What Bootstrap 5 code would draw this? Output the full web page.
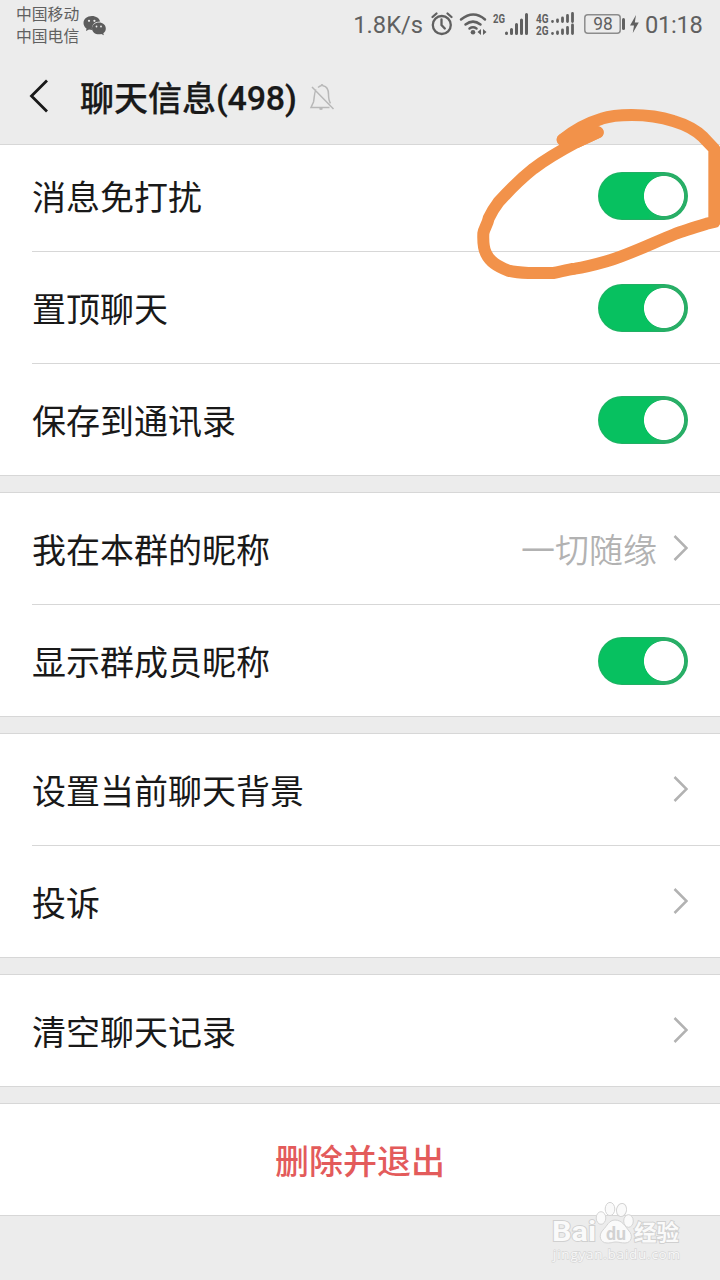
<!DOCTYPE html>
<html lang="zh-CN">
<head>
<meta charset="utf-8">
<meta name="viewport" content="width=device-width, initial-scale=1">
<title>聊天信息</title>
<link href="https://cdn.jsdelivr.net/npm/bootstrap@5.3.0/dist/css/bootstrap.min.css" rel="stylesheet">
<style>
body{background:#ececec;color:#191919;font-family:Roboto,"Noto Sans CJK SC",sans-serif;width:720px;height:1280px;overflow:hidden}
.status{height:50px;color:#606060;padding-left:16px;padding-right:16px}
.carriers{font-size:15.8px;line-height:22px;padding-top:4px}
.stat-text{font-size:23.7px;line-height:50px;white-space:nowrap}
.titlebar{height:94px;padding-left:28px}
.titlebar h1{font-size:34px;line-height:50px;font-weight:500;margin-left:30px;padding-top:2px;white-space:nowrap;-webkit-text-stroke:.25px #191919}
.title-num{letter-spacing:-.2px;vertical-align:1px}
.cells{border-top:1px solid #d7d7d7;border-bottom:1px solid #d7d7d7;background:#fff;margin-bottom:16px}
.cell{height:111px;margin-left:32px;padding:1px 32px 0 0;font-size:34px;line-height:50px}
.cell > span{padding-top:3px}
.cell > svg{margin-bottom:2px}
.cell + .cell{border-top:1px solid #d7d7d7;height:112px}
.cell.first-cell{height:106px;padding:0 32px 4px 0}
.toggle.form-check-input{width:90px;height:48px;margin:0;border:0;border-radius:24px;background-color:#2aae67;background-size:100% 100%;box-shadow:inset 0 0 0 1px #22af64}
.toggle.form-check-input:checked{background-color:#2aae67;background-image:radial-gradient(circle at 66px 24px,#fff 19.6px,transparent 20.4px),linear-gradient(90deg,#07c160 0 50px,#2aae67 66px);background-position:0 0}
.hint{color:#b2b2b2;font-weight:350}
.remove{color:#e35b5b;height:111px;font-size:34px;line-height:50px;font-weight:500;padding-top:4px}
.scribble{left:460px;top:100px}
.watermark{left:546px;top:1196px}
</style>
</head>
<body class="position-relative">
<header>
  <div class="status d-flex align-items-start">
    <div class="carriers text-nowrap"><div>中国移动</div><div>中国电信</div></div>
    <svg class="ms-1 mt-3" width="24" height="20" viewBox="0 0 24 20" fill="#5c5c5c"><path d="M9 0C4 0 .5 3 .5 7c0 2.200 1.100 4.200 3 5.500L3 15l3-1.500q1.500.400 3 .400C8.300 9 12 5.500 17.200 5.600 16.300 2.200 13 0 9 0Z"/><path d="M16 6.500c-4 0-7 2.600-7 5.900s3 5.900 7 5.900q1.200 0 2.300-.300l2.600 1.300-.600-2.100c1.700-1.200 2.500-2.900 2.500-4.800 0-3.300-3-5.900-6.800-5.900Z"/><g fill="#ececec"><circle cx="6" cy="4.800" r="1.100"/><circle cx="11.400" cy="4.800" r="1.100"/><circle cx="13.500" cy="10.500" r=".9"/><circle cx="18" cy="10.500" r=".9"/></g></svg>
    <span class="stat-text ms-auto">1.8K/s</span>
    <svg width="216" height="50" viewBox="430 0 216 50" fill="#606060" style="margin-left:7px">
      <g fill="none" stroke="#606060" stroke-width="2.300" stroke-linecap="round">
        <circle cx="441.800" cy="25" r="9"/><path d="M441.500 19.500V25l3.300 3.500M432.500 17l4-3.500M451.500 17l-4-3.500"/>
        <path d="M461 19.500q12.500-10 24 0M465.500 24.500q7.500-5.800 15 0M469.500 28.500q3.500-2.300 7 0" stroke-width="2.500"/>
      </g>
      <circle cx="473" cy="32.300" r="2.300"/><path d="M481 29v6l-3.500-3ZM483 29v6l3.500-3Z"/>
      <g font-family="Roboto,sans-serif" font-weight="700" font-size="12">
        <text x="493" y="22.500" textLength="12" lengthAdjust="spacingAndGlyphs">2G</text>
        <text x="536" y="22.500" textLength="12.500" lengthAdjust="spacingAndGlyphs">4G</text>
        <text x="536" y="35" textLength="12.500" lengthAdjust="spacingAndGlyphs">2G</text>
      </g>
      <path d="M506.500 33v.5M511.500 29.500v4M516.500 24.500v9M521.500 20v13.500M526.500 14.500v19" stroke="#606060" stroke-width="3" stroke-linecap="round"/>
      <path d="M552.500 21.500v0M557.500 20v1.500M562.500 18v3.500M567.500 15.500v6M572.500 13.500v8M552.500 33.500v0M557.500 32v1.500M562.500 30v3.500M567.500 27.500v6M572.500 25v8.500" stroke="#606060" stroke-width="2.800" stroke-linecap="round"/>
      <rect x="584.800" y="14.800" width="35.400" height="18.400" rx="3" fill="none" stroke="#8c8c8c" stroke-width="1.500"/>
      <rect x="622" y="18" width="3" height="12" rx="1.500"/>
      <text x="603" y="30.300" text-anchor="middle" font-family="Roboto,sans-serif" font-size="18" textLength="19.500" lengthAdjust="spacingAndGlyphs">98</text>
      <path d="M636 15l-6 10.500h4l-1.200 7.500 6-10.500h-4Z"/>
    </svg>
    <span class="stat-text" style="width:59px;margin-left:-1px;letter-spacing:-.3px">01:18</span>
  </div>
  <div class="titlebar d-flex align-items-center">
    <svg width="22" height="36" viewBox="0 0 22 36" fill="none" stroke="#191919" stroke-width="2.800"><path d="M19 1.500 3.500 17 19 32.500"/></svg>
    <h1 class="mb-0">聊天信息<span class="title-num">(498)</span></h1>
    <svg style="margin-left:12px" width="28" height="30" viewBox="0 0 28 30" fill="none" stroke="#b8b8b8" stroke-width="1.500"><path d="M7 7.500C5 11 5.500 16 4.500 20L2 25.500h18.500M9 5.500q2-1.600 3-1.700 1-2 2 0 5.500 1 5.500 8.500 0 6 2 9M10.500 26.500q1.500 1.300 3 0M3 5l21.500 22"/></svg>
  </div>
</header>
<main>
  <section class="cells">
    <div class="cell first-cell d-flex align-items-center justify-content-between"><span>消息免打扰</span><input class="form-check-input toggle" type="checkbox" checked></div>
    <div class="cell d-flex align-items-center justify-content-between"><span>置顶聊天</span><input class="form-check-input toggle" type="checkbox" checked></div>
    <div class="cell d-flex align-items-center justify-content-between"><span>保存到通讯录</span><input class="form-check-input toggle" type="checkbox" checked></div>
  </section>
  <section class="cells">
    <div class="cell d-flex align-items-center"><span>我在本群的昵称</span><span class="hint ms-auto">一切随缘</span><svg class="ms-3" width="15" height="28" viewBox="0 0 15 28" fill="none" stroke="#b2b2b2" stroke-width="2.500"><path d="M1.500 2 13.500 14 1.500 26"/></svg></div>
    <div class="cell d-flex align-items-center justify-content-between"><span>显示群成员昵称</span><input class="form-check-input toggle" type="checkbox" checked></div>
  </section>
  <section class="cells">
    <div class="cell d-flex align-items-center justify-content-between"><span>设置当前聊天背景</span><svg width="15" height="28" viewBox="0 0 15 28" fill="none" stroke="#b2b2b2" stroke-width="2.500"><path d="M1.500 2 13.500 14 1.500 26"/></svg></div>
    <div class="cell d-flex align-items-center justify-content-between"><span>投诉</span><svg width="15" height="28" viewBox="0 0 15 28" fill="none" stroke="#b2b2b2" stroke-width="2.500"><path d="M1.500 2 13.500 14 1.500 26"/></svg></div>
  </section>
  <section class="cells">
    <div class="cell d-flex align-items-center justify-content-between"><span>清空聊天记录</span><svg width="15" height="28" viewBox="0 0 15 28" fill="none" stroke="#b2b2b2" stroke-width="2.500"><path d="M1.500 2 13.500 14 1.500 26"/></svg></div>
  </section>
  <section class="cells">
    <div class="remove d-flex align-items-center justify-content-center">删除并退出</div>
  </section>
</main>
<svg class="scribble position-absolute" width="260" height="190" viewBox="0 0 780 570" fill="none" stroke="#f2924a" stroke-width="36" stroke-linecap="round" stroke-linejoin="round"><path d="M308 119 345 95 413 97 350 126Z" fill="#f2924a"/><path d="M413 97C370 112 340 122 308 119C340 92 385 68 425 56C455 46 480 45 515 45C560 45 600 50 640 63C680 75 710 92 730 112L763 147V366L740 371C710 380 670 392 645 402C580 428 510 463 440 484C405 494 375 502 345 506C320 508 300 516 280 519H205C180 518 160 516 145 512C110 498 90 485 78 460C70 445 69 425 70 400C72 385 82 375 86 355C95 335 105 320 115 307C150 268 190 230 220 206C265 172 305 150 350 126L413 97"/></svg>
<svg class="watermark position-absolute" width="146" height="72" viewBox="546 1196 146 72">
  <g fill="#fafafa" stroke="#d4d4d4" stroke-width="1">
    <ellipse cx="601" cy="1218" rx="4.800" ry="6.300"/><ellipse cx="610" cy="1209" rx="4.800" ry="6.600"/><ellipse cx="621.500" cy="1210" rx="5" ry="6.600" transform="rotate(12 621.500 1210)"/><ellipse cx="628.500" cy="1221" rx="4.800" ry="6.300"/>
    <path d="M615 1220c-6 0-8 6-12 10-5 5-3 13 4 13 5 0 6-1 9-1s5 1 9 1c7 0 8-8 4-12-4-5-7-11-14-11Z"/>
  </g>
  <g fill="#fafafa" stroke="#d0d0d0" stroke-width="1.800" paint-order="stroke" font-weight="700">
    <text x="552" y="1241" font-family="Roboto,sans-serif" font-size="27" textLength="44" lengthAdjust="spacingAndGlyphs">Bai</text>
    <text x="634" y="1240" font-family="Noto Sans CJK SC,sans-serif" font-size="22" textLength="45" lengthAdjust="spacingAndGlyphs">经验</text>
  </g>
  <text x="606" y="1239.500" font-family="Roboto,sans-serif" font-weight="700" font-size="18" fill="#d2d2d2" textLength="20" lengthAdjust="spacingAndGlyphs">du</text>
  <text x="553" y="1259" font-family="Open Sans,sans-serif" font-size="13.500" fill="#f8f8f8" stroke="#d6d6d6" stroke-width="1.300" paint-order="stroke" textLength="127" lengthAdjust="spacing">jingyan.baidu.com</text>
</svg>
<script src="https://cdn.jsdelivr.net/npm/bootstrap@5.3.0/dist/js/bootstrap.bundle.min.js"></script>
</body>
</html>
